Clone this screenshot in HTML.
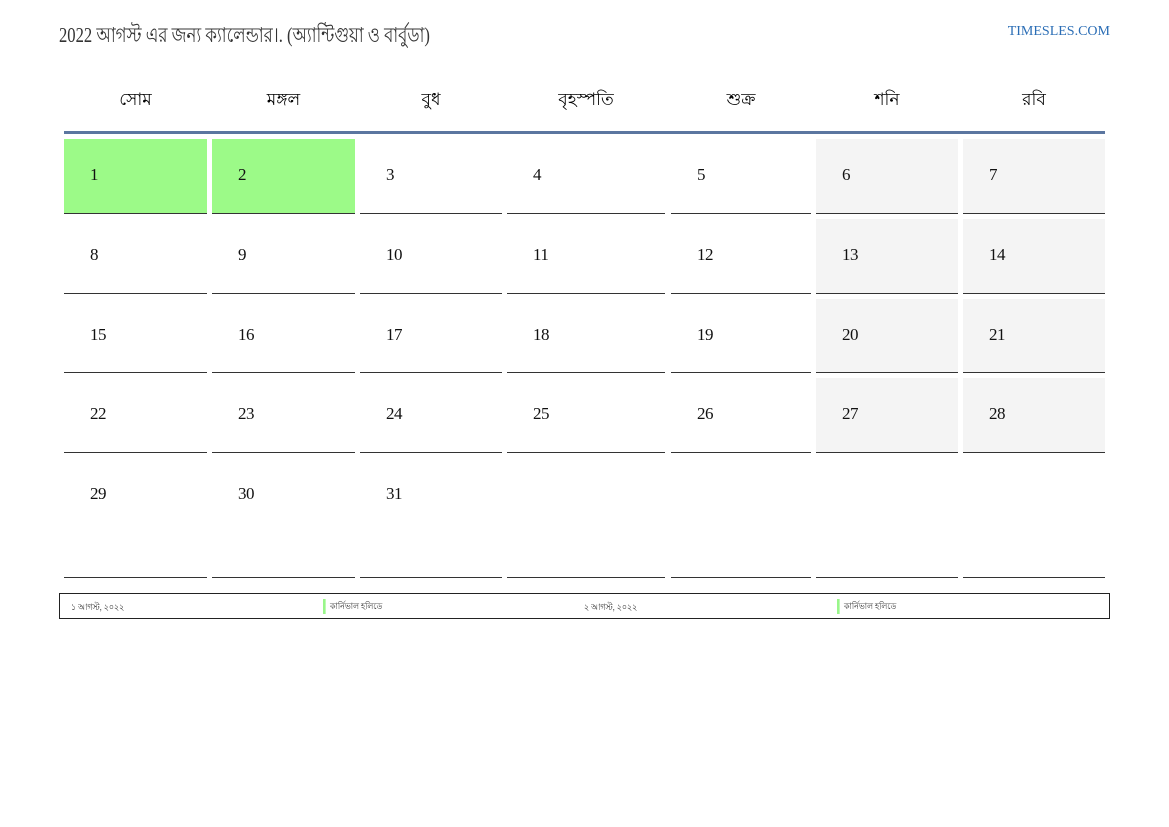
<!DOCTYPE html>
<html><head><meta charset="utf-8"><style>
body{margin:0;width:1169px;height:827px;background:#fff;font-family:"Liberation Serif",serif;position:relative;overflow:hidden}
.t{position:absolute;left:59px;top:19px;font-size:21px;color:#333;transform:scaleX(0.79);transform-origin:left;white-space:nowrap}
.l{position:absolute;right:59px;top:24px;font-size:14px;color:#2a6db5}
.d{position:absolute;top:87px;font-size:17px;text-align:center;color:#000}
.hl{position:absolute;left:64px;top:131px;width:1041px;height:3px;background:#5b76a0}
.c{position:absolute;border-bottom:1px solid #333;box-sizing:border-box;font-size:17px;color:#111}
.c span{position:absolute;left:26px;top:26px;letter-spacing:-0.5px}
.f{position:absolute;left:59px;top:593px;width:1049px;height:24px;border:1px solid #222;font-size:9px;color:#333}
.f div{position:absolute;top:6px;transform:scaleX(0.88);transform-origin:left;white-space:nowrap}
.g{border-left:3px solid #99f68a;padding-left:5px;top:5px!important}
</style></head><body>
<div class="t">2022 আগস্ট এর জন্য ক্যালেন্ডার।. (অ্যান্টিগুয়া ও বার্বুডা)</div>
<div class="l">TIMESLES.COM</div>
<div class="d" style="left:64px;width:143px">সোম</div>
<div class="d" style="left:212px;width:143px">মঙ্গল</div>
<div class="d" style="left:360px;width:142px">বুধ</div>
<div class="d" style="left:507px;width:158px">বৃহস্পতি</div>
<div class="d" style="left:671px;width:140px">শুক্র</div>
<div class="d" style="left:816px;width:142px">শনি</div>
<div class="d" style="left:963px;width:142px">রবি</div>
<div class="hl"></div>
<div id="g"></div>
<div class="f">
<div style="left:11px">১ আগস্ট, ২০২২</div>
<div class="g" style="left:263px">কার্নিভাল হলিডে</div>
<div style="left:524px">২ আগস্ট, ২০২২</div>
<div class="g" style="left:777px">কার্নিভাল হলিডে</div>
</div>
<script>
var cols=[[64,143],[212,143],[360,142],[507,158],[671,140],[816,142],[963,142]];
var rows=[[139,75],[219,75],[299,74],[378,75],[458,120]];
var h='',n=1;
for(var r=0;r<5;r++)for(var c=0;c<7;c++){
 var bg='';
 if(n<=2&&r==0&&c<2)bg='#9cfa88';else if(c>=5&&r<4)bg='#f4f4f4';
 var txt=(r<4||c<3)?'<span>'+n+'</span>':'';
 h+='<div class="c" style="left:'+cols[c][0]+'px;width:'+cols[c][1]+'px;top:'+rows[r][0]+'px;height:'+rows[r][1]+'px;background:'+(bg||'transparent')+'">'+txt+'</div>';
 n++;
}
document.getElementById('g').innerHTML=h;
</script>
</body></html>
